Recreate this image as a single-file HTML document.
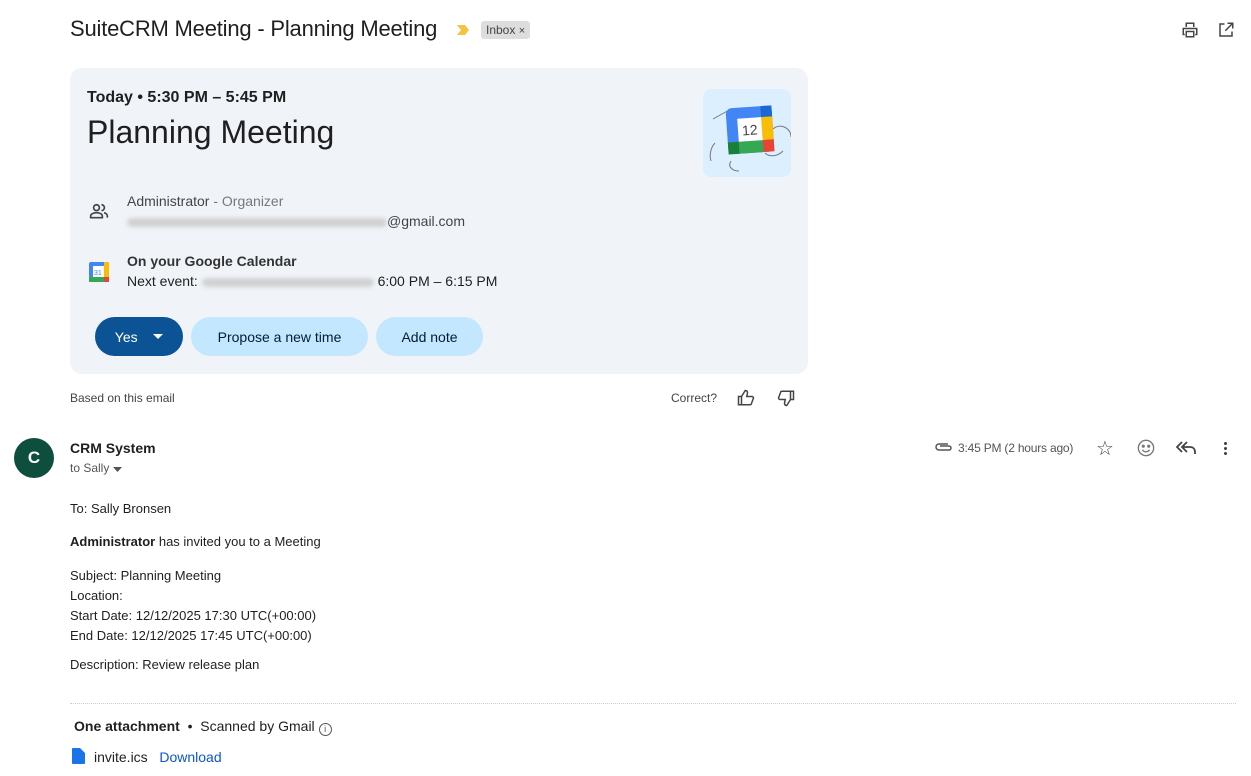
<!DOCTYPE html>
<html><head><meta charset="utf-8"><style>
*{box-sizing:border-box;margin:0;padding:0}
body{width:1251px;height:776px;background:#fff;font-family:"Liberation Sans",Arial,sans-serif;color:#1f1f1f;position:relative;overflow:hidden}
.a{position:absolute;white-space:nowrap}
.blur{display:inline-block;height:9px;background:#d0d0d0;border-radius:5px;filter:blur(2px);vertical-align:middle}
.btn{position:absolute;top:317px;height:39px;border-radius:20px;font-size:14px;display:flex;align-items:center;justify-content:center;background:#c2e7ff;color:#001d35}
</style></head><body>
<div class="a" style="left:70px;top:16px;font-size:22px;color:#1f1f1f;letter-spacing:-0.2px">SuiteCRM Meeting - Planning Meeting</div>
<svg class="a" style="left:456px;top:24px" width="14" height="12"><path d="M1 1h8l4 5-4 5H1l4-5z" fill="#f5c242"/></svg>
<div class="a" style="left:481px;top:21px;background:#ddd;border-radius:3px;font-size:12px;padding:2px 5px;color:#444">Inbox <span style="font-size:11px">×</span></div>
<svg class="a" style="left:1181px;top:21px" width="18" height="18" viewBox="0 0 24 24" fill="none" stroke="#444" stroke-width="2"><path d="M7 8V3h10v5M5 18H3v-8h18v8h-2M7 14h10v7H7z"/></svg>
<svg class="a" style="left:1217px;top:21px" width="18" height="18" viewBox="0 0 24 24" fill="none" stroke="#444" stroke-width="2"><path d="M10 4H4v16h16v-6M14 3h7v7M21 3l-10 10"/></svg>

<div class="a" style="left:70px;top:68px;width:738px;height:306px;background:#f0f4f9;border-radius:12px"></div>
<div class="a" style="left:87px;top:89px;font-size:16px;font-weight:bold">Today • 5:30 PM – 5:45 PM</div>
<div class="a" style="left:87px;top:114px;font-size:32px">Planning Meeting</div>
<div class="a" style="left:703px;top:89px;width:88px;height:88px;background:#dcefff;border-radius:8px;overflow:hidden">
<svg width="88" height="88" viewBox="0 0 88 88"><path d="M70 40c6-6 18-2 18 8M62 64c4 4 12 4 18-2M8 72c-2-6 0-14 4-18M28 72c-4 6 2 10 8 10M10 30L28 20" fill="none" stroke="#777" stroke-width="1"/>
<g transform="rotate(-4 46 41)"><rect x="24" y="18" width="46" height="46" rx="6" fill="#4285f4"/><rect x="59" y="18" width="11" height="11" fill="#1a66d2"/><rect x="59" y="29" width="11" height="23" fill="#fbbc04"/><rect x="59" y="52" width="11" height="12" fill="#ea4335"/><rect x="24" y="52" width="11" height="12" fill="#188038"/><rect x="35" y="52" width="24" height="12" fill="#34a853"/><rect x="35" y="29" width="24" height="23" fill="#fff"/><text x="39" y="46" font-size="14" fill="#444" font-family="Liberation Sans">12</text></g></svg></div>
<svg class="a" style="left:88px;top:201px" width="22" height="20" viewBox="0 0 24 24" fill="none" stroke="#444" stroke-width="2"><circle cx="9" cy="8" r="3.5"/><path d="M2 20v-2c0-2 3-4 7-4s7 2 7 4v2zM15 4.5a3.5 3.5 0 010 7M18 14c2 .5 4 2 4 4v2"/></svg>
<div class="a" style="left:127px;top:193px;font-size:14px;color:#444">Administrator <span style="color:#777">- Organizer</span></div>
<div class="a" style="left:127px;top:213px;font-size:14px;color:#444"><span class="blur" style="width:260px"></span>@gmail.com</div>
<svg class="a" style="left:89px;top:262px" width="20" height="20" viewBox="0 0 20 20"><rect x="0" y="0" width="20" height="20" rx="2" fill="#4285f4"/><rect x="15" y="0" width="5" height="15" fill="#fbbc04"/><rect x="0" y="15" width="15" height="5" fill="#34a853"/><rect x="15" y="15" width="5" height="5" fill="#ea4335"/><rect x="4" y="4" width="11" height="11" fill="#fff"/><text x="5" y="13" font-size="7" fill="#4285f4">31</text></svg>
<div class="a" style="left:127px;top:253px;font-size:14px;font-weight:bold;color:#333">On your Google Calendar</div>
<div class="a" style="left:127px;top:273px;font-size:14px">Next event: <span class="blur" style="width:172px"></span> 6:00 PM – 6:15 PM</div>
<div class="btn" style="left:95px;width:88px;background:#0b5394;color:#fff">Yes&nbsp;&nbsp;&nbsp;&nbsp;<svg width="10" height="6"><path d="M0 0h10L5 5z" fill="#fff"/></svg></div>
<div class="btn" style="left:191px;width:177px">Propose a new time</div>
<div class="btn" style="left:376px;width:107px">Add note</div>

<div class="a" style="left:70px;top:391px;font-size:12px;color:#444">Based on this email</div>
<div class="a" style="left:671px;top:391px;font-size:12px;color:#444">Correct?</div>
<svg class="a" style="left:736px;top:389px" width="20" height="18" viewBox="0 0 24 24" fill="none" stroke="#444" stroke-width="2"><path d="M2 10h4v11H2zM6 10l5-8c2 0 3 1 3 3l-1 5h7c1 0 2 1 2 2l-3 8c0 1-1 1-2 1H6"/></svg>
<svg class="a" style="left:776px;top:389px" width="20" height="18" viewBox="0 0 24 24" fill="none" stroke="#444" stroke-width="2"><path d="M22 14h-4V3h4zM18 14l-5 8c-2 0-3-1-3-3l1-5H4c-1 0-2-1-2-2l3-8c0-1 1-1 2-1h11"/></svg>

<div class="a" style="left:14px;top:438px;width:40px;height:40px;border-radius:50%;background:#0d4f3c;color:#fff;font-size:17px;font-weight:bold;display:flex;align-items:center;justify-content:center">C</div>
<div class="a" style="left:70px;top:440px;font-size:14px;font-weight:bold">CRM System</div>
<div class="a" style="left:70px;top:461px;font-size:12px;color:#555">to Sally <svg width="9" height="5"><path d="M0 0h9L4.5 5z" fill="#555"/></svg></div>
<svg class="a" style="left:934px;top:442px" width="18" height="10" viewBox="0 0 18 10" fill="none" stroke="#555" stroke-width="1.5"><path d="M14 2H5a3 3 0 000 6h10a2 2 0 000-4H6"/></svg>
<div class="a" style="left:958px;top:441px;font-size:12px;color:#555;letter-spacing:-0.2px">3:45 PM (2 hours ago)</div>
<div class="a" style="left:1096px;top:436px;font-size:20px;color:#444">☆</div>
<svg class="a" style="left:1137px;top:439px" width="18" height="18" viewBox="0 0 20 20" fill="none" stroke="#777" stroke-width="1.5"><circle cx="10" cy="10" r="8.5"/><circle cx="7" cy="8" r="1" fill="#777"/><circle cx="13" cy="8" r="1" fill="#777"/><path d="M6 12c2 3 6 3 8 0"/></svg>
<svg class="a" style="left:1176px;top:440px" width="20" height="16" viewBox="0 0 20 16" fill="none" stroke="#444" stroke-width="1.8"><path d="M6 2L1 7l5 5M11 2L6 7l5 5M6 7h8c3 0 5 2 5 5v2"/></svg>
<div class="a" style="left:1224px;top:441px;width:3px;height:14px;background:radial-gradient(circle,#444 1.4px,transparent 1.6px) 0 0/3px 5px"></div>

<div class="a" style="left:70px;top:501px;font-size:13px">To: Sally Bronsen</div>
<div class="a" style="left:70px;top:534px;font-size:13px"><b>Administrator</b> has invited you to a Meeting</div>
<div class="a" style="left:70px;top:566px;font-size:13px;line-height:20px">Subject: Planning Meeting<br>Location:<br>Start Date: 12/12/2025 17:30 UTC(+00:00)<br>End Date: 12/12/2025 17:45 UTC(+00:00)</div>
<div class="a" style="left:70px;top:657px;font-size:13px">Description: Review release plan</div>
<div class="a" style="left:70px;top:703px;width:1166px;border-top:1px dotted #ccc"></div>
<div class="a" style="left:74px;top:718px;font-size:14px"><b>One attachment</b> &nbsp;•&nbsp; Scanned by Gmail <span style="display:inline-block;width:13px;height:13px;border:1.3px solid #555;border-radius:50%;font-size:9px;text-align:center;line-height:11px;color:#555;vertical-align:-1px">i</span></div>
<svg class="a" style="left:72px;top:748px" width="13" height="16" viewBox="0 0 13 16"><path d="M0 1a1 1 0 011-1h7l5 5v10a1 1 0 01-1 1H1a1 1 0 01-1-1z" fill="#1a73e8"/></svg>
<div class="a" style="left:94px;top:749px;font-size:14px">invite.ics &nbsp; <span style="color:#0b57d0">Download</span></div>
</body></html>
